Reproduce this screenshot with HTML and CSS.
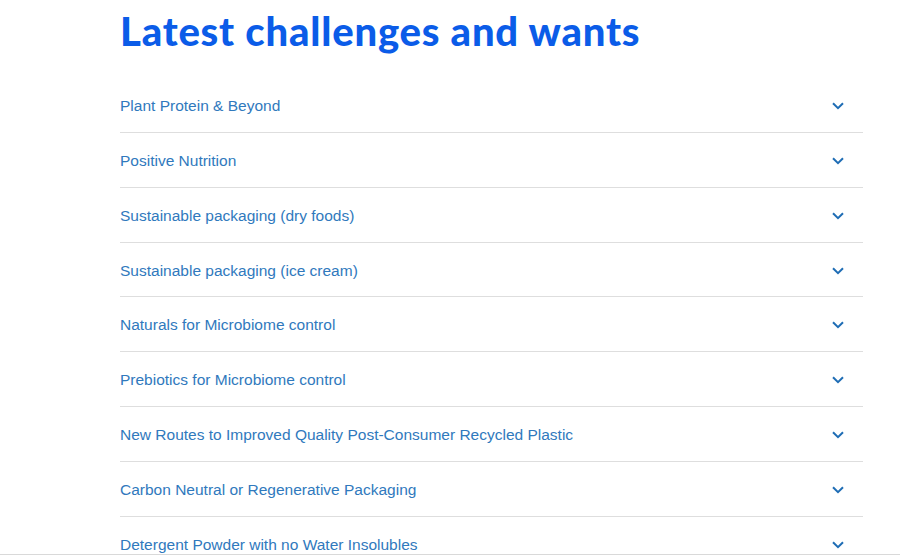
FILE: index.html
```html
<!DOCTYPE html>
<html lang="en">
<head>
  <meta charset="UTF-8">
  <meta name="viewport" content="width=device-width, initial-scale=1.0">
  <title>Latest challenges and wants</title>
  <link rel="stylesheet" href="styles.css">
</head>
<body>
  <div class="wants">
    <h2 class="wants-title">Latest challenges and wants</h2>

    <div class="wants-list">
      <div class="wants-item"><span>Plant Protein &amp; Beyond</span><svg class="wants-chevron" viewBox="0 0 12 8"><path d="M1 1.2 6 6.2 11 1.2"/></svg></div>
      <div class="wants-item"><span>Positive Nutrition</span><svg class="wants-chevron" viewBox="0 0 12 8"><path d="M1 1.2 6 6.2 11 1.2"/></svg></div>
      <div class="wants-item"><span>Sustainable packaging (dry foods)</span><svg class="wants-chevron" viewBox="0 0 12 8"><path d="M1 1.2 6 6.2 11 1.2"/></svg></div>
      <div class="wants-item"><span>Sustainable packaging (ice cream)</span><svg class="wants-chevron" viewBox="0 0 12 8"><path d="M1 1.2 6 6.2 11 1.2"/></svg></div>
      <div class="wants-item"><span>Naturals for Microbiome control</span><svg class="wants-chevron" viewBox="0 0 12 8"><path d="M1 1.2 6 6.2 11 1.2"/></svg></div>
      <div class="wants-item"><span>Prebiotics for Microbiome control</span><svg class="wants-chevron" viewBox="0 0 12 8"><path d="M1 1.2 6 6.2 11 1.2"/></svg></div>
      <div class="wants-item"><span>New Routes to Improved Quality Post-Consumer Recycled Plastic</span><svg class="wants-chevron" viewBox="0 0 12 8"><path d="M1 1.2 6 6.2 11 1.2"/></svg></div>
      <div class="wants-item"><span>Carbon Neutral or Regenerative Packaging</span><svg class="wants-chevron" viewBox="0 0 12 8"><path d="M1 1.2 6 6.2 11 1.2"/></svg></div>
      <div class="wants-item"><span>Detergent Powder with no Water Insolubles</span><svg class="wants-chevron" viewBox="0 0 12 8"><path d="M1 1.2 6 6.2 11 1.2"/></svg></div>
    </div>
  </div>

  <div class="page-edge"></div>
</body>
</html>
```

FILE: styles.css
```css
html, body {
  margin: 0;
  padding: 0;
  background-color: #fff;
  box-sizing: border-box;
  overflow: hidden;
}
*, *:before, *:after { box-sizing: inherit; }

.wants {
  width: 743px;
  margin-left: 120px;
  padding-top: 8px;
}
.wants .wants-title {
  margin: 0 0 24px;
  font-family: Lato, "Noto Sans", sans-serif;
  font-weight: 900;
  font-size: 40px;
  line-height: 46px;
  letter-spacing: 0.8px;
  color: #0b5ce8;
}

.wants-item {
  display: flex;
  align-items: center;
  justify-content: space-between;
  height: 54.86px;
  padding-top: 2px;
  border-bottom: 1px solid #dedede;
  font-family: "Liberation Sans", Arial, sans-serif;
  font-size: 15.5px;
  color: #3079bd;
}
.wants-chevron {
  width: 12px;
  height: 8px;
  margin-right: 19px;
  fill: none;
  stroke: #1f6db5;
  stroke-width: 2;
}

.page-edge {
  position: fixed;
  left: 0;
  right: 0;
  bottom: 0;
  height: 3px;
  background: #fff;
  border-top: 1px solid #d9d9d9;
}
```
